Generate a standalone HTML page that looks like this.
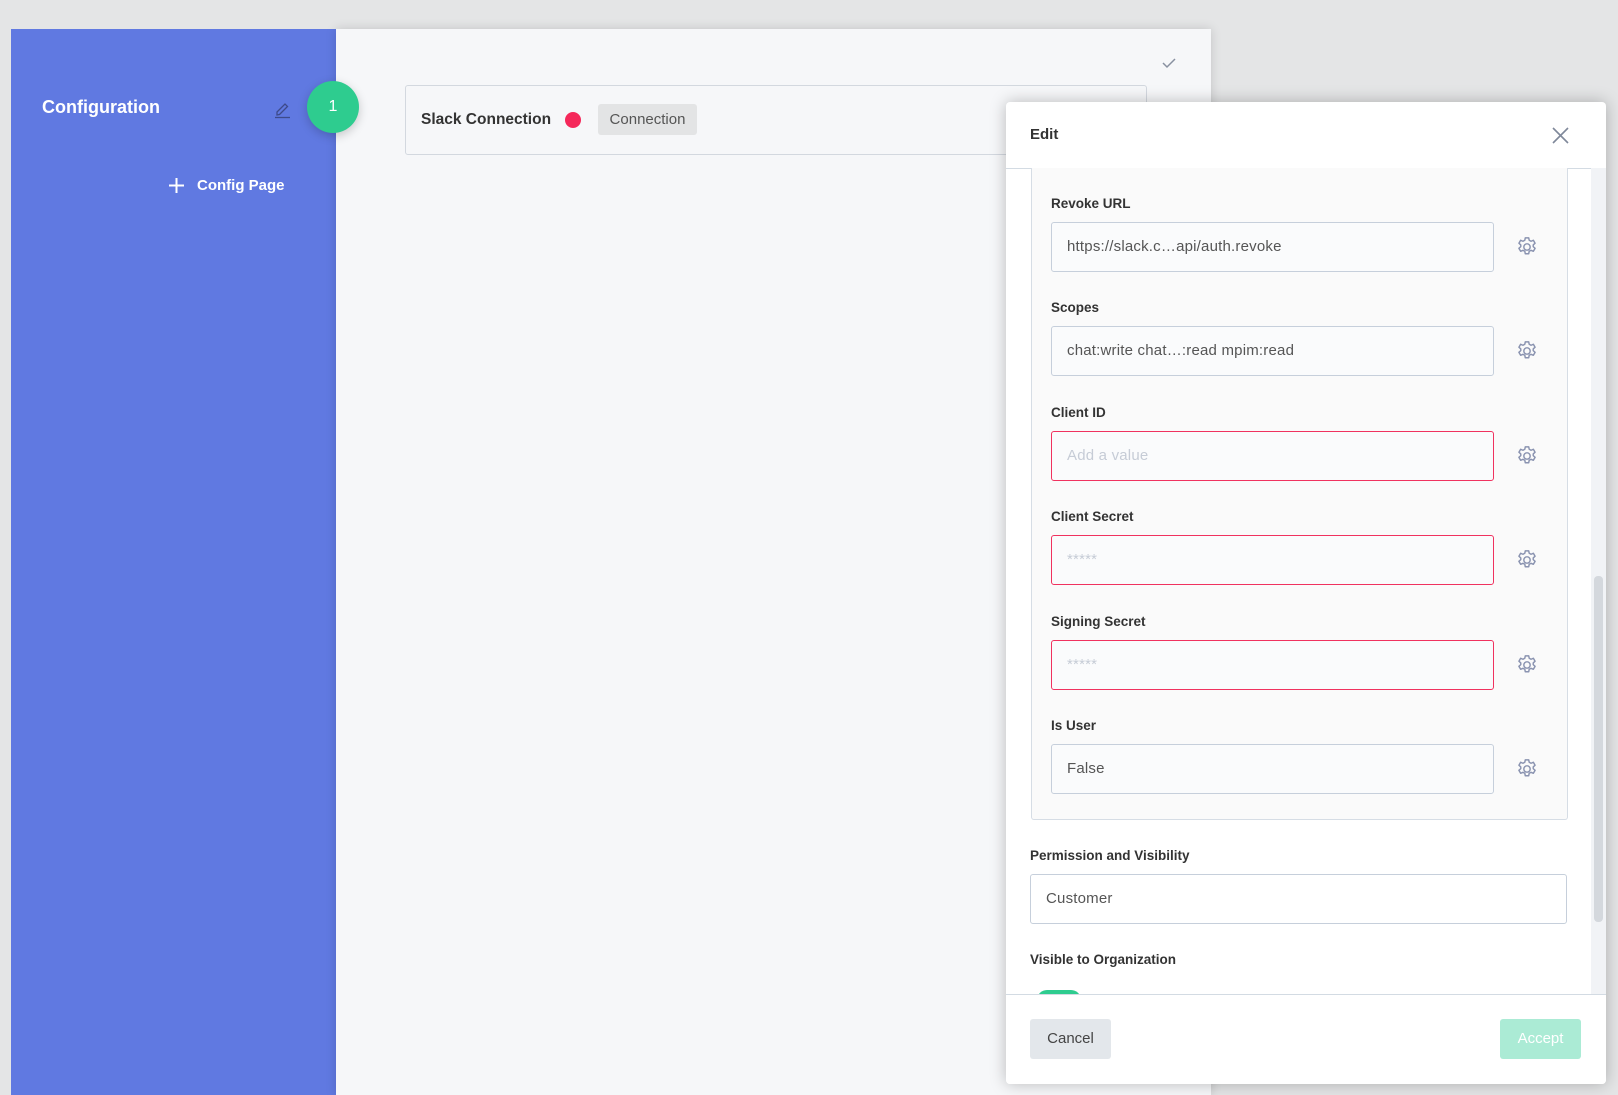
<!DOCTYPE html>
<html><head><meta charset="utf-8"><style>
*{box-sizing:border-box;margin:0;padding:0}
body{width:1618px;height:1095px;overflow:hidden;background:#e4e5e6;font-family:"Liberation Sans",Arial,sans-serif;position:relative}
.abs{position:absolute}
.blue{left:11px;top:29px;width:325px;height:1066px;background:#6079e1}
.main{left:336px;top:29px;width:875px;height:1066px;background:#f6f7f9;box-shadow:0 0 10px rgba(0,0,0,.15)}
.modal{left:1006px;top:102px;width:600px;height:982px;background:#fff;border-radius:4px;box-shadow:0 0 16px rgba(0,0,0,.25);overflow:hidden}
.lbl{position:absolute;left:1051px;font-size:13.5px;font-weight:bold;color:#333}
.inp{position:absolute;left:1051px;width:443px;height:50px;border:1px solid #c6cfdb;border-radius:3px;background:#fafbfc;font-size:15px;color:#555;padding-left:15px;line-height:48px;letter-spacing:.2px}
.err{border-color:#f0325f}
.ph{color:#c6ccd6}
.gear{position:absolute;left:1516px}
</style></head><body>
<div class="abs blue"></div>
<div class="abs main"></div>
<div class="abs" style="left:42px;top:97px;color:#fff;font-size:18px;font-weight:bold">Configuration</div>
<svg class="abs" style="left:273px;top:99px" width="18" height="20" viewBox="0 0 18 20"><path d="M4 13 L12 5 L14.5 7.5 L6.5 15.5 L4 16 Z" fill="none" stroke="#3d4a8a" stroke-width="1.3"/><line x1="2" y1="18.5" x2="17" y2="18.5" stroke="#3d4a8a" stroke-width="1.3"/></svg>
<div class="abs" style="left:307px;top:81px;width:52px;height:52px;border-radius:50%;background:#2ecc8f;color:#fff;font-size:16px;text-align:center;line-height:52px;box-shadow:0 3px 10px rgba(0,0,0,.2)">1</div>
<svg class="abs" style="left:168px;top:177px" width="17" height="17"><path d="M8.5 1V16M1 8.5H16" stroke="#fff" stroke-width="2"/></svg>
<div class="abs" style="left:197px;top:177px;color:#fff;font-size:15px;font-weight:bold">Config Page</div>
<div class="abs" style="left:405px;top:85px;width:742px;height:70px;border:1px solid #d3d8df;border-radius:3px;background:#f6f7f9"></div>
<div class="abs" style="left:421px;top:111px;font-size:15.5px;font-weight:bold;color:#333">Slack Connection</div>
<div class="abs" style="left:565px;top:112px;width:16px;height:16px;border-radius:50%;background:#f5285a"></div>
<div class="abs" style="left:598px;top:104px;width:99px;height:31px;background:#e3e4e5;border-radius:3px;font-size:15px;color:#555;text-align:center;line-height:31px">Connection</div>
<svg class="abs" style="left:1162px;top:57px" width="14" height="12"><path d="M1 6L5 10L13 2" fill="none" stroke="#8890a0" stroke-width="1.5"/></svg>

<div class="abs modal"></div>
<div class="abs" style="left:1030px;top:126px;font-size:15px;font-weight:bold;color:#333">Edit</div>
<svg class="abs" style="left:1552px;top:127px" width="17" height="17"><path d="M1 1L16 16M16 1L1 16" stroke="#7f889a" stroke-width="1.6"/></svg>
<div class="abs" style="left:1006px;top:168px;width:600px;height:826px;background:#fff;border-top:1px solid #d3dbe3"></div>
<div class="abs" style="left:1031px;top:168px;width:537px;height:652px;background:#fafafa;border:1px solid #d6dde5;border-top:none;border-radius:0 0 3px 3px"></div>
<div class="abs" style="left:1591px;top:168px;width:15px;height:826px;background:#f1f3f6"></div>
<div class="abs" style="left:1594px;top:576px;width:9px;height:346px;background:#d4d8dd;border-radius:4px"></div>

<div class="lbl" style="top:196px">Revoke URL</div>
<div class="inp" style="top:222px">https://slack.c…api/auth.revoke</div>
<div class="lbl" style="top:300px">Scopes</div>
<div class="inp" style="top:326px">chat:write chat…:read mpim:read</div>
<div class="lbl" style="top:405px">Client ID</div>
<div class="inp err" style="top:431px"><span class="ph">Add a value</span></div>
<div class="lbl" style="top:509px">Client Secret</div>
<div class="inp err" style="top:535px"><span class="ph">*****</span></div>
<div class="lbl" style="top:614px">Signing Secret</div>
<div class="inp err" style="top:640px"><span class="ph">*****</span></div>
<div class="lbl" style="top:718px">Is User</div>
<div class="inp" style="top:744px">False</div>

<svg width="0" height="0" style="position:absolute"><defs><g id="g"><circle cx="9" cy="9" r="2.6" fill="none" stroke="#8a93b0" stroke-width="1.2"/><path d="M7.6 1.5h2.8l.4 2 1.5.8 1.9-.8 1.4 2.4-1.5 1.4v1.4l1.5 1.4-1.4 2.4-1.9-.8-1.5.8-.4 2H7.6l-.4-2-1.5-.8-1.9.8-1.4-2.4 1.5-1.4V7.3L2.4 5.9l1.4-2.4 1.9.8 1.5-.8z" fill="none" stroke="#8a93b0" stroke-width="1.2" stroke-linejoin="round"/></g></defs></svg>
<svg class="gear" style="top:236px" width="22" height="22" viewBox="0 0 18 18"><use href="#g"/></svg>
<svg class="gear" style="top:340px" width="22" height="22" viewBox="0 0 18 18"><use href="#g"/></svg>
<svg class="gear" style="top:445px" width="22" height="22" viewBox="0 0 18 18"><use href="#g"/></svg>
<svg class="gear" style="top:549px" width="22" height="22" viewBox="0 0 18 18"><use href="#g"/></svg>
<svg class="gear" style="top:654px" width="22" height="22" viewBox="0 0 18 18"><use href="#g"/></svg>
<svg class="gear" style="top:758px" width="22" height="22" viewBox="0 0 18 18"><use href="#g"/></svg>

<div class="lbl" style="left:1030px;top:848px">Permission and Visibility</div>
<div class="inp" style="left:1030px;top:874px;width:537px;background:#fff">Customer</div>
<div class="lbl" style="left:1030px;top:952px">Visible to Organization</div>
<div class="abs" style="left:1037px;top:990px;width:44px;height:20px;border-radius:10px;background:#2ecc8f"></div>
<div class="abs" style="left:1006px;top:994px;width:600px;height:90px;background:#fff;border-top:1px solid #d3dbe3;border-radius:0 0 4px 4px"></div>
<div class="abs" style="left:1030px;top:1019px;width:81px;height:40px;background:#e3e7eb;border-radius:3px;font-size:15px;color:#444;text-align:center;line-height:40px">Cancel</div>
<div class="abs" style="left:1500px;top:1019px;width:81px;height:40px;background:#abebd5;border-radius:3px;font-size:15px;color:#fff;text-align:center;line-height:40px">Accept</div>
</body></html>
